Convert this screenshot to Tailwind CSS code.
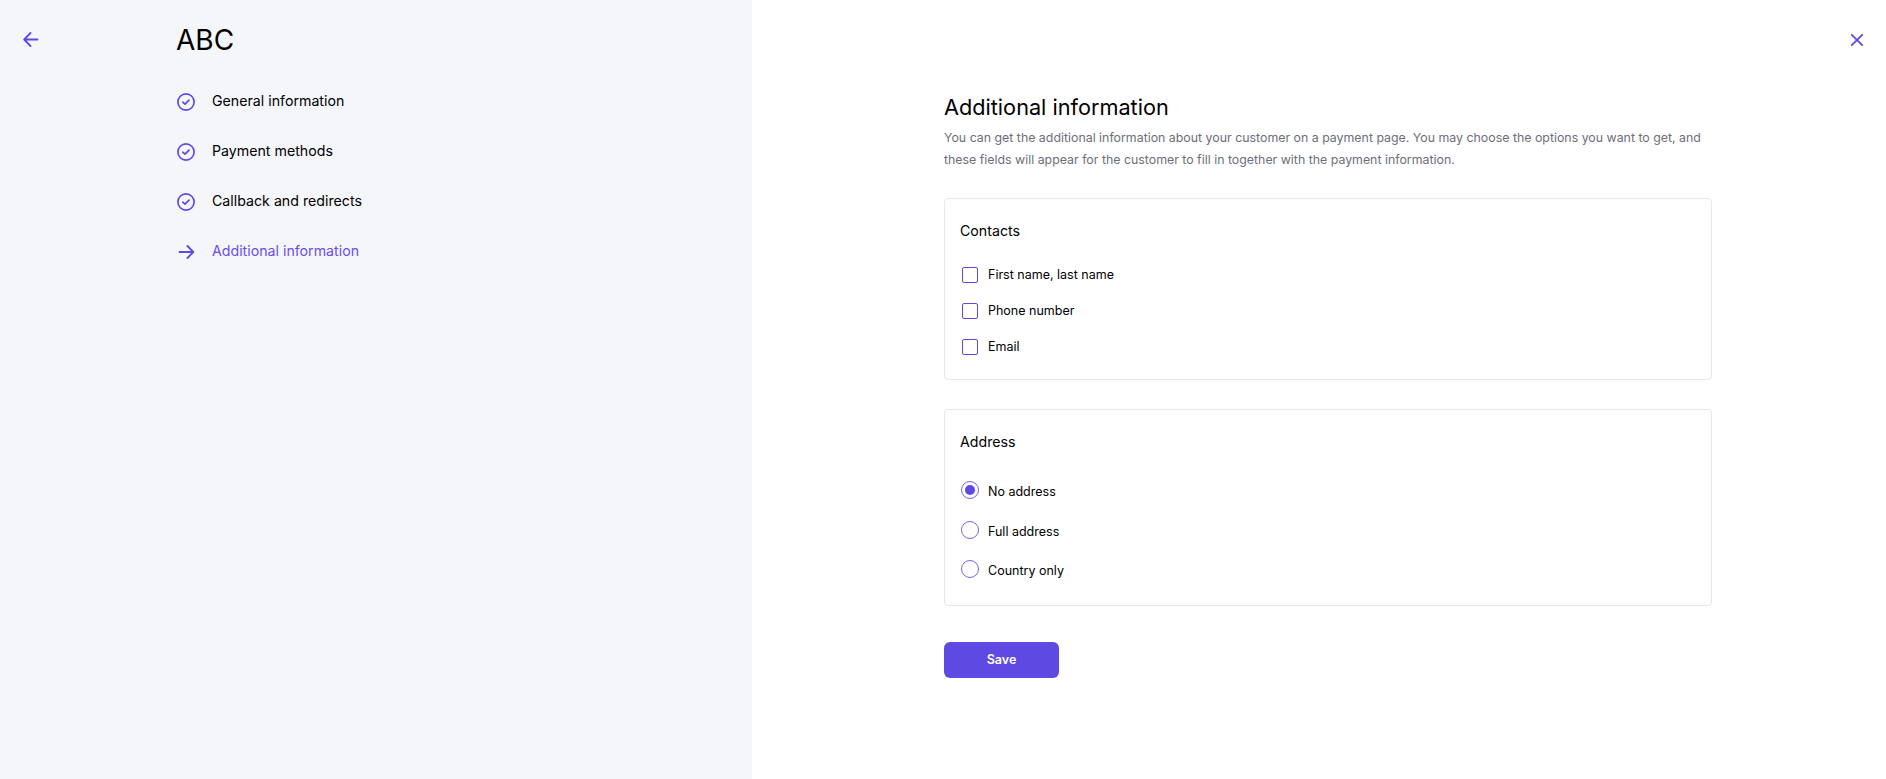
<!doctype html>
<html lang="en">
<head>
<meta charset="utf-8">
<title>Additional information</title>
<script src="https://cdn.jsdelivr.net/npm/@tailwindcss/browser@4"></script>
</head>
<body class="bg-white font-['Inter',sans-serif] text-black">
<div class="flex h-[779px] w-full overflow-hidden">
  <aside class="relative w-[752px] shrink-0 bg-[#f5f6fa]">
    <svg class="absolute left-[23px] top-[32px] h-[16px] w-[16px]" viewBox="0 0 16 16" fill="none" stroke="#5f49e3" stroke-width="1.8" stroke-linecap="round" stroke-linejoin="round"><path d="M14.5 7.5H1.5M7.5 1 1.2 7.5 7.5 14"/></svg>
    <div class="pl-[176px] pt-[23px]">
      <h1 class="text-[28px] leading-[34px] font-normal">ABC</h1>
      <ul class="mt-[19px] flex flex-col text-[14.2px] leading-[50px]">
        <li class="flex h-[50px] items-center gap-[17px] pl-[1px]">
          <svg class="mt-[1px] h-[18px] w-[18px]" viewBox="0 0 18 18" fill="none" stroke="#5f49e3"><circle cx="9" cy="9" r="8.1" stroke-width="1.7"/><path d="M5.8 9.2 8 11.2l4-4" stroke-width="1.7" stroke-linecap="round" stroke-linejoin="round"/></svg>
          <span>General information</span>
        </li>
        <li class="flex h-[50px] items-center gap-[17px] pl-[1px]">
          <svg class="mt-[1px] h-[18px] w-[18px]" viewBox="0 0 18 18" fill="none" stroke="#5f49e3"><circle cx="9" cy="9" r="8.1" stroke-width="1.7"/><path d="M5.8 9.2 8 11.2l4-4" stroke-width="1.7" stroke-linecap="round" stroke-linejoin="round"/></svg>
          <span>Payment methods</span>
        </li>
        <li class="flex h-[50px] items-center gap-[17px] pl-[1px]">
          <svg class="mt-[1px] h-[18px] w-[18px]" viewBox="0 0 18 18" fill="none" stroke="#5f49e3"><circle cx="9" cy="9" r="8.1" stroke-width="1.7"/><path d="M5.8 9.2 8 11.2l4-4" stroke-width="1.7" stroke-linecap="round" stroke-linejoin="round"/></svg>
          <span>Callback and redirects</span>
        </li>
        <li class="flex h-[50px] items-center gap-[17px] pl-[1px] text-[#6b4fe6]">
          <svg class="mt-[1px] h-[18px] w-[18px]" viewBox="0 0 18 18" fill="none" stroke="#5f49e3" stroke-width="1.8" stroke-linecap="round" stroke-linejoin="round"><path d="M2.5 9h13.5M10.5 3 16.3 9l-5.8 6"/></svg>
          <span>Additional information</span>
        </li>
      </ul>
    </div>
  </aside>
  <main class="relative flex-1 pl-[192px] pt-[92px]">
    <svg class="absolute right-[23px] top-[34px] h-[12px] w-[12px]" viewBox="0 0 12 12" fill="none" stroke="#5f49e3" stroke-width="1.8" stroke-linecap="round"><path d="M.8.8l10.4 10.4M11.2.8.8 11.2"/></svg>
    <div class="w-[768px]">
      <h2 class="text-[21.7px] leading-[30px] font-normal">Additional information</h2>
      <p class="mt-[5px] text-[12.36px] leading-[22px] text-[#6e6e78]">You can get the additional information about your customer on a payment page. You may choose the options you want to get, and these fields will appear for the customer to fill in together with the payment information.</p>
      <section class="mt-[27px] h-[182px] rounded-[4px] border border-[#e8e8ec] px-[15px] pt-[22px]">
        <h3 class="text-[14.2px] leading-[20px] font-normal">Contacts</h3>
        <div class="mt-[16px] flex flex-col text-[12.5px]">
          <label class="flex h-[36px] items-center gap-[10px] pl-[2px]"><span class="h-[16px] w-[16px] rounded-[2px] border border-[#5f49e3]"></span>First name, last name</label>
          <label class="flex h-[36px] items-center gap-[10px] pl-[2px]"><span class="h-[16px] w-[16px] rounded-[2px] border border-[#5f49e3]"></span>Phone number</label>
          <label class="flex h-[36px] items-center gap-[10px] pl-[2px]"><span class="h-[16px] w-[16px] rounded-[2px] border border-[#5f49e3]"></span>Email</label>
        </div>
      </section>
      <section class="mt-[29px] h-[197px] rounded-[4px] border border-[#e8e8ec] px-[15px] pt-[22px]">
        <h3 class="text-[14.2px] leading-[20px] font-normal">Address</h3>
        <div class="mt-[19px] flex flex-col text-[12.5px]">
          <label class="flex h-[40px] items-center gap-[9px] pl-[1px]"><span class="-mt-[2px] flex h-[18px] w-[18px] items-center justify-center rounded-full border border-[#7a64ea]"><span class="h-[10px] w-[10px] rounded-full bg-[#5f49e3]"></span></span><span class="mt-[3px]">No address</span></label>
          <label class="flex h-[39px] items-center gap-[9px] pl-[1px]"><span class="-mt-[2px] h-[18px] w-[18px] rounded-full border border-[#7a64ea]"></span><span class="mt-[3px]">Full address</span></label>
          <label class="flex h-[40px] items-center gap-[9px] pl-[1px]"><span class="-mt-[2px] h-[18px] w-[18px] rounded-full border border-[#7a64ea]"></span><span class="mt-[3px]">Country only</span></label>
        </div>
      </section>
      <button class="mt-[36px] h-[36px] w-[115px] rounded-[6px] bg-[#5f49e3] text-[12.5px] font-semibold text-white">Save</button>
    </div>
  </main>
</div>
</body>
</html>
